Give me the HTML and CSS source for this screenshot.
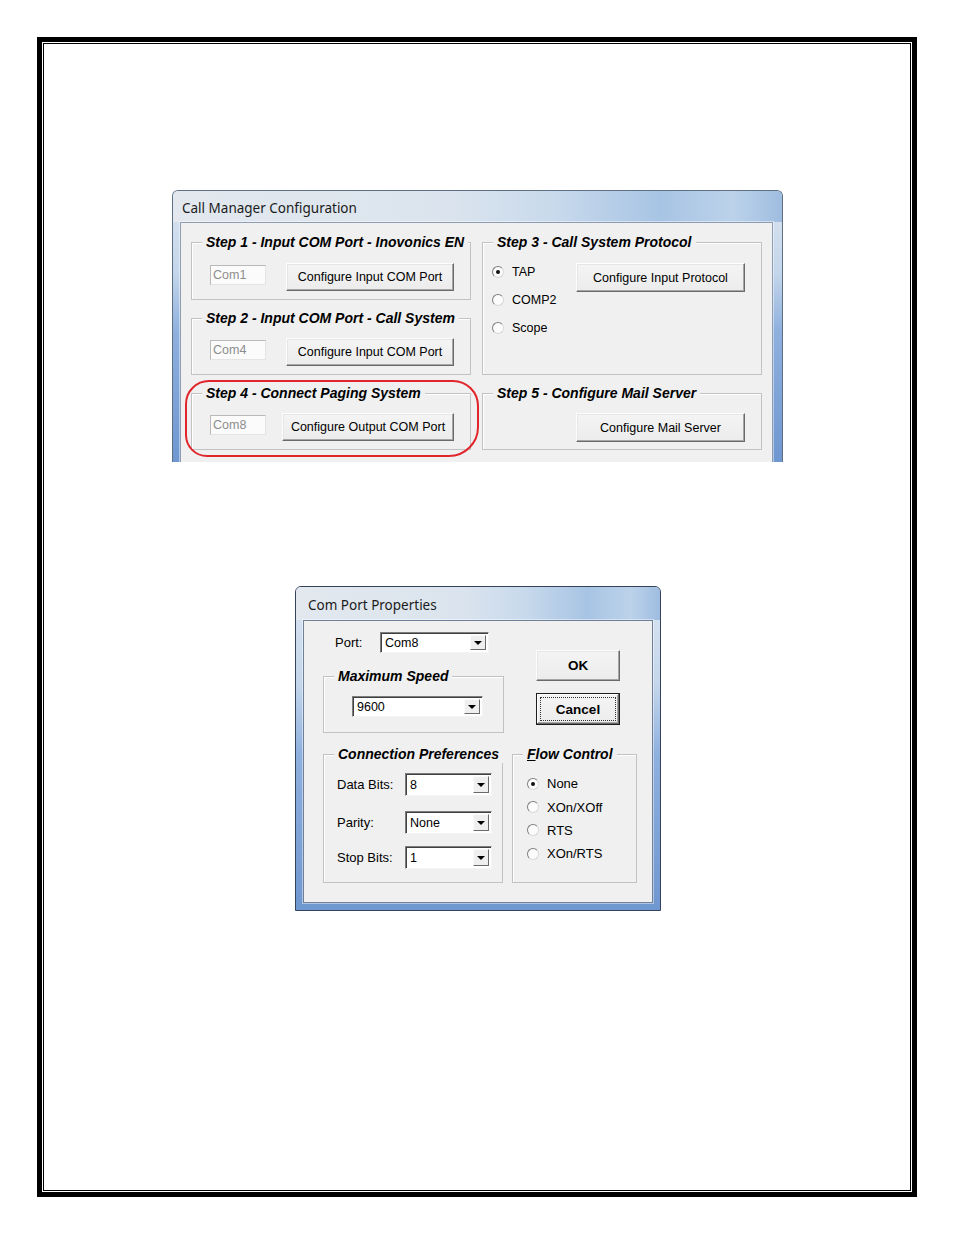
FILE: index.html
```html
<!DOCTYPE html>
<html>
<head>
<meta charset="utf-8">
<link rel="stylesheet" href="styles.css">
</head>
<body>
<div class="page">
  <div class="inner">

    <div class="win win1">
      <div class="titlebar t1">Call Manager Configuration</div>
      <div class="client c1">
        <div class="col">
          <div class="group g1">
            <span class="legend">Step 1 - Input COM Port - Inovonics EN</span>
            <div class="row">
              <span class="field">Com1</span>
              <span class="btn bcfg">Configure Input COM Port</span>
            </div>
          </div>
          <div class="group g2">
            <span class="legend">Step 2 - Input COM Port - Call System</span>
            <div class="row">
              <span class="field">Com4</span>
              <span class="btn bcfg">Configure Input COM Port</span>
            </div>
          </div>
          <div class="hl">
            <div class="group g4">
              <span class="legend">Step 4 - Connect Paging System</span>
              <div class="row">
                <span class="field">Com8</span>
                <span class="btn bout">Configure Output COM Port</span>
              </div>
            </div>
            <div class="ring"></div>
          </div>
        </div>
        <div class="col">
          <div class="group g3">
            <span class="legend">Step 3 - Call System Protocol</span>
            <div class="radios r1">
              <div class="ropt"><span class="radio on"></span><span>TAP</span></div>
              <div class="ropt"><span class="radio"></span><span>COMP2</span></div>
              <div class="ropt"><span class="radio"></span><span>Scope</span></div>
            </div>
            <span class="btn bright b3">Configure Input Protocol</span>
          </div>
          <div class="group g5">
            <span class="legend">Step 5 - Configure Mail Server</span>
            <span class="btn bright b5">Configure Mail Server</span>
          </div>
        </div>
      </div>
    </div>

    <div class="win win2">
      <div class="titlebar t2">Com Port Properties</div>
      <div class="client c2">
        <div class="top">
          <div class="lcol">
            <div class="portrow">
              <span class="plabel">Port:</span>
              <span class="combo cport"><span class="cval">Com8</span><span class="carrow"></span></span>
            </div>
            <div class="group gspeed">
              <span class="legend">Maximum Speed</span>
              <span class="combo cspeed"><span class="cval">9600</span><span class="carrow"></span></span>
            </div>
          </div>
          <div class="bcol">
            <span class="btn dbtn ok">OK</span>
            <span class="btn dbtn cancel"><span class="focus">Cancel</span></span>
          </div>
        </div>
        <div class="bottom">
          <div class="group gconn">
            <span class="legend">Connection Preferences</span>
            <div class="crow cr1"><span class="clabel">Data Bits:</span><span class="combo csm"><span class="cval">8</span><span class="carrow"></span></span></div>
            <div class="crow cr2"><span class="clabel">Parity:</span><span class="combo csm"><span class="cval">None</span><span class="carrow"></span></span></div>
            <div class="crow cr3"><span class="clabel">Stop Bits:</span><span class="combo csm"><span class="cval">1</span><span class="carrow"></span></span></div>
          </div>
          <div class="group gflow">
            <span class="legend"><u>F</u>low Control</span>
            <div class="radios r2">
              <div class="ropt"><span class="radio on"></span><span>None</span></div>
              <div class="ropt"><span class="radio"></span><span>XOn/XOff</span></div>
              <div class="ropt"><span class="radio"></span><span>RTS</span></div>
              <div class="ropt"><span class="radio"></span><span>XOn/RTS</span></div>
            </div>
          </div>
        </div>
      </div>
    </div>

  </div>
</div>
</body>
</html>
```

FILE: styles.css
```css
* { box-sizing: border-box; }
html, body { margin: 0; padding: 0; background: #fff; }
body { font-family: "Liberation Sans", Arial, sans-serif; color: #000; }

.page {
  margin: 37px;
  height: 1160px;
  border: 5px solid #000;
  padding: 1px;
}
.inner {
  height: 100%;
  border: 1px solid #000;
  overflow: hidden;
}

/* windows */
.win {
  display: flex;
  flex-direction: column;
  border: 1px solid #5f6f84;
  border-radius: 6px 6px 0 0;
  background: linear-gradient(to bottom, #dae5f0 0%, #c4d6eb 30%, #8eb0de 52%, #6f97d0 100%);
  overflow: hidden;
}
.win1 { margin: 146px 0 0 128px; width: 611px; height: 272px; border-bottom: none; }
.win2 { margin: 124px 0 0 251px; width: 366px; height: 325px; border-color: #34435a; }

.titlebar {
  flex: none;
  font-family: "Noto Sans", "Open Sans", sans-serif;
  font-size: 13.5px;
  color: #1b1b1b;
  display: flex;
  align-items: center;
  background: linear-gradient(to right, #e2e8ee 0%, #dbe4ee 45%, #c9daec 62%, #a8c4e4 80%, #bcd2ea 92%, #9fbde0 100%);
}
.t1 { height: 31px; padding-left: 9px; padding-top: 2px; }
.t2 { height: 33px; padding-left: 12px; padding-top: 2px; }

.client {
  flex: 1;
  background: #f0f0f0;
  border: 1px solid #8e9db2;
  box-shadow: 0 0 0 1px rgba(255,255,255,0.45);
}
.c1 {
  margin: 0 9px 0 7px;
  display: flex;
  gap: 11px;
  padding: 19px 0 0 10px;
  border-bottom: none;
  font-size: 12.5px;
}
.c2 {
  margin: 0 7px 7px 7px;
  padding: 11px 0 0 19px;
  font-size: 13px;
  border-color: #6f8098;
}

.col { width: 280px; display: flex; flex-direction: column; }

/* group boxes */
.group {
  position: relative;
  border: 1px solid #c2c2c2;
  box-shadow: inset 1px 1px 0 #fff;
}
.legend {
  position: absolute;
  top: -9px;
  left: 10px;
  padding: 0 4px;
  background: #f0f0f0;
  line-height: 17px;
  font-size: 14px;
  font-weight: bold;
  font-style: italic;
  color: #000;
  white-space: nowrap;
}

.g1 { height: 58px; padding: 20px 16px 0 18px; }
.g2 { height: 57px; padding: 19px 16px 0 18px; margin-top: 18px; }
.g4 { height: 57px; padding: 19px 16px 0 18px; }
.hl { position: relative; margin-top: 18px; }
.ring {
  position: absolute;
  left: -6px; right: -8px; top: -13px; bottom: -7px;
  border: 2.5px solid #e0262b;
  border-radius: 24px 26px 30px 22px;
}

.row { display: flex; justify-content: space-between; align-items: flex-start; }

.field {
  width: 56px;
  height: 20px;
  margin-top: 2px;
  background: #fbfbfb;
  border: 1px solid #b9b9b9;
  border-right-color: #e4e4e4;
  border-bottom-color: #e4e4e4;
  color: #8d8d8d;
  padding: 1px 0 0 2px;
  line-height: 16px;
}

.btn {
  display: flex;
  align-items: center;
  justify-content: center;
  background: linear-gradient(to bottom, #f4f4f4, #ececec);
  border: 1px solid;
  border-color: #fdfdfd #6a6a6a #6a6a6a #fdfdfd;
  box-shadow: inset -1px -1px 0 #a6a6a6, inset 1px 1px 0 #e6e6e6;
  white-space: nowrap;
}
.bcfg { width: 168px; height: 28px; }
.bout { width: 172px; height: 28px; }
.bright { width: 169px; height: 29px; position: absolute; right: 16px; }

.g3 { height: 133px; }
.b3 { top: 20px; }
.g5 { height: 57px; margin-top: 18px; }
.b5 { top: 19px; }

.radios { display: flex; flex-direction: column; }
.r1 { padding: 15px 0 0 9px; }
.r1 .ropt { height: 28px; }
.ropt { display: flex; align-items: center; gap: 8px; }
.radio {
  position: relative;
  flex: none;
  width: 12px;
  height: 12px;
  border-radius: 50%;
  background: #fcfcfc;
  border: 1px solid;
  border-color: #7e7e7e #d8d8d8 #d8d8d8 #7e7e7e;
}
.radio.on::after {
  content: "";
  position: absolute;
  left: 3px; top: 3px;
  width: 4px; height: 4px;
  border-radius: 50%;
  background: #111;
}

/* dialog 2 */
.top { display: flex; }
.lcol { width: 181px; }
.portrow { display: flex; align-items: center; height: 21px; }
.plabel { width: 45px; margin-left: 12px; }

.combo {
  display: flex;
  align-items: stretch;
  background: #fff;
  border: 1px solid;
  border-color: #7d7d7d #f4f4f4 #f4f4f4 #7d7d7d;
  box-shadow: inset 1px 1px 0 #3f3f3f;
  padding: 2px;
}
.cval { flex: 1; padding-left: 2px; display: flex; align-items: center; font-size: 12.5px; }
.carrow {
  position: relative;
  width: 16px;
  background: #efefef;
  border: 1px solid;
  border-color: #fafafa #6a6a6a #6a6a6a #fafafa;
}
.carrow::after {
  content: "";
  position: absolute;
  left: 3px; top: 50%;
  margin-top: -2px;
  border-left: 4px solid transparent;
  border-right: 4px solid transparent;
  border-top: 4px solid #000;
}
.cport { width: 109px; height: 21px; }
.gspeed { height: 57px; margin-top: 23px; padding: 19px 0 0 28px; }
.cspeed { width: 131px; height: 21px; }

.bcol { width: 84px; margin-left: 32px; display: flex; flex-direction: column; }
.dbtn { font-weight: bold; font-size: 13.5px; }
.ok { height: 31px; margin-top: 18px; }
.cancel {
  height: 32px;
  margin-top: 12px;
  border-color: #1e1e1e;
  box-shadow: inset -1px -1px 0 #6a6a6a, inset 1px 1px 0 #fff, inset -2px -2px 0 #a6a6a6;
  padding: 3px;
}
.focus {
  width: 100%;
  height: 100%;
  display: flex;
  align-items: center;
  justify-content: center;
  border: 1px dotted #333;
}

.bottom { display: flex; gap: 9px; margin-top: 21px; }
.gconn { width: 180px; height: 129px; padding: 18px 0 0 13px; }
.crow { display: flex; align-items: center; height: 23px; }
.cr2 { margin-top: 15px; }
.cr3 { margin-top: 12px; }
.clabel { width: 68px; }
.csm { width: 87px; height: 23px; }

.gflow { width: 125px; height: 129px; }
.r2 { padding: 17px 0 0 14px; }
.r2 .ropt { height: 23.4px; }
```
